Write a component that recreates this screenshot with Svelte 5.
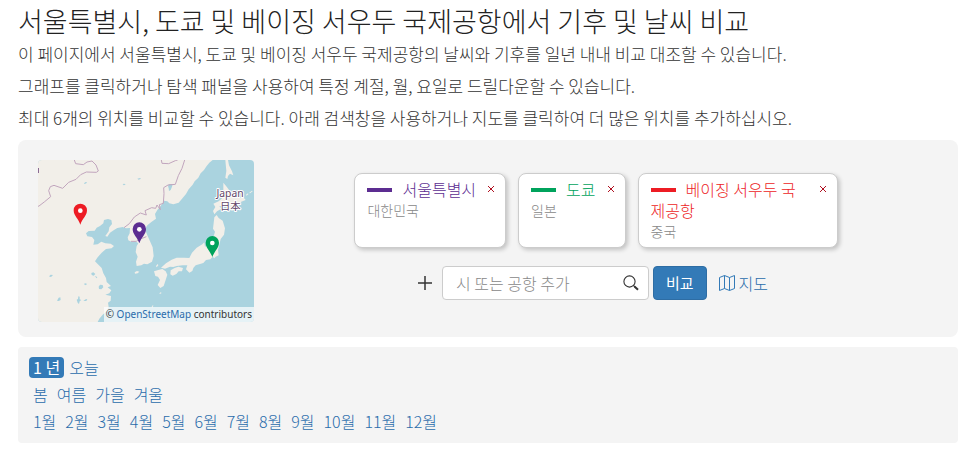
<script>
  const places = [
    { name: "서울특별시", country: "대한민국", color: "#5c2d91" },
    { name: "도쿄", country: "일본", color: "#00a35c" },
    { name: "베이징 서우두 국제공항", country: "중국", color: "#ed1c24" },
  ];

  const pins = [
    { x: 151, y: 224, color: "#ed1c24" },
    { x: 328, y: 280, color: "#5c2d91" },
    { x: 547, y: 321, color: "#00a35c" },
  ];

  const seasons = ["봄", "여름", "가을", "겨울"];
  const months = Array.from({ length: 12 }, (_, i) => `${i + 1}월`);

  let query = $state("");
</script>

<main>
  <h1>서울특별시, 도쿄 및 베이징 서우두 국제공항에서 기후 및 날씨 비교</h1>
  <p>이 페이지에서 서울특별시, 도쿄 및 베이징 서우두 국제공항의 날씨와 기후를 일년 내내 비교 대조할 수 있습니다.</p>
  <p>그래프를 클릭하거나 탐색 패널을 사용하여 특정 계절, 월, 요일로 드릴다운할 수 있습니다.</p>
  <p>최대 6개의 위치를 비교할 수 있습니다. 아래 검색창을 사용하거나 지도를 클릭하여 더 많은 위치를 추가하십시오.</p>

  <section class="compare">
    <div class="map">
      <svg viewBox="24 30 648 486" role="img" aria-label="Map">
        <rect x="24" y="30" width="648" height="486" fill="#aad3df" />
        <g fill="#f2efe9">
          <path d="M24 30H548L538 38 530 48 522 60 512 70 505 83 494 94 488 104 476 118 468 132 458 144 446 158 430 163 418 160 412 154 402 152 392 168 382 180 375 192 378 206 364 216 352 226 345 238 352 256 362 278 368 292 371 318 366 335 352 343 342 341 334 346 320 348 318 335 323 320 317 306 320 288 325 280 316 274 304 275 295 271 293 262 299 250 300 234 288 235 278 231 262 234 252 240 240 248 232 260 226 258 236 244 238 232 246 222 244 210 234 207 222 210 220 220 210 228 200 233 194 242 176 243 168 250 172 259 186 261 193 270 190 284 203 283 214 275 226 280 242 281 252 288 245 295 228 297 215 308 203 322 195 334 206 345 215 354 220 370 228 384 230 396 243 408 233 412 244 421 238 430 226 434 243 438 242 452 234 458 236 470 230 484 218 494 208 506 203 516H24z" />
          <path d="M586 30h8l3 16 9 18 4 12-10-5-6 7-2 9-6 -4 3-20z" />
          <path d="M580 98 590 110 601 125 614 135 628 143 640 142 647 150 632 156 622 168 617 178 608 182 594 173 580 168 568 168 574 176 561 184 553 193 549 183 556 171 550 161 566 154 576 145 580 130z" />
          <path d="M553 202 560 195 566 204 578 212 585 235 582 254 572 267 568 284 564 300 566 316 557 320 553 325 548 320 541 328 528 330 520 339 510 342 497 346 490 354 487 363 478 368 468 358 472 346 458 346 440 348 430 351 420 350 405 356 393 353 408 340 425 329 440 323 462 323 478 324 486 308 500 293 517 283 523 277 525 290 538 282 550 262 555 245 549 236z" />
          <path d="M422 361 434 354 445 350 459 354 456 364 446 364 439 372 428 377 421 373z" />
          <path d="M372 364 385 360 397 357 407 364 412 374 407 390 401 408 391 414 383 405 390 390 384 380 376 378z" />
          <path d="M314 367l7-4 7 2-5 5-8 1zM378 348l5-6 2 4-5 6zM388 430l4-3 3 2-5 3zM648 134l6-4 1 3-6 4zM658 128l8-6 2 2-8 6zM365 470l4-5 1 3-4 6z" />
        </g>
        <g fill="#aad3df">
          <path d="M414 108l3-6 11 0-2 8-4 10-5 3-1-8zM162 101l3-4 6-1-2 4-5 2zM184 369l6-2 6 5-5 5-6-2zM206 410l4-6 8 1 2 7-6 6-7-1zM140 449l4-2 1-8 4 1 0 8 5 2-5 4-2 8-4-4zM81 452l5-9 5-1 1 8-6 3zM58 378l4-4 7 1-5 5-5 1zM160 453l7-5 5-1-3 6zM194 378l8 3-2 4zM278 102l5-1 4 3-6 2zM162 401l6-1 3 3-6 3zM322 86l8-2 3 2-7 3z" />
        </g>
        <g fill="none" stroke="#c1a5bd" stroke-width="3" stroke-linejoin="round">
          <path d="M133 30l4 11 23 3 11-8 15-3 12 12 7 18-6 4-30-1-17 8-14 14-22 9-18 18-26-9-11 4-5 12 6 18-18 15-17 13-12 4" />
          <path d="M394 30l2 10 20 1 20-9 7-2M464 30l-8 25-11 22-9 26-22 2-13 8 1 18 -2 29-12 4 3 15-10-14-4 10-12-2-20 9 4 13-18-6-18 12-15 20-16 12" />
          <path d="M303 274l16 0 9-8 11-2 10-4" />
        </g>
        <path d="M24 54h3v15h-3z" fill="#8b6b94" />
        <g class="country">
          <text x="600" y="140">Japan</text>
          <text x="601" y="179">日本</text>
        </g>
        {#each pins as pin}
          <g transform="translate({pin.x} {pin.y})">
            <path d="M0 0C-6-18-20-27-20-43a20 20 0 0 1 40 0C20-27 6-18 0 0z" fill={pin.color} />
            <circle cx="0" cy="-42" r="7" fill="#fff" />
          </g>
        {/each}
      </svg>
      <small>© <a href="#osm">OpenStreetMap</a> contributors</small>
    </div>

    <div class="controls">
      <ul class="cards">
        {#each places as place}
          <li style:color={place.color}>
            <div class="place">
              <span class="line"></span>{place.name}
              <span class="where">{place.country}</span>
            </div>
            <button class="remove" type="button" aria-label="{place.name} 삭제">
              <svg viewBox="0 0 8 8"><path d="M1 1l6 6M7 1L1 7" /></svg>
            </button>
          </li>
        {/each}
      </ul>

      <form class="search" onsubmit={(e) => e.preventDefault()}>
        <svg class="plus" viewBox="0 0 14 14"><path d="M7 0v14M0 7h14" /></svg>
        <div class="field">
          <input type="text" aria-label="시 또는 공항 추가" placeholder="시 또는 공항 추가" bind:value={query} />
          <svg viewBox="0 0 16 16">
            <circle cx="6.5" cy="6.5" r="5.6" />
            <path d="M10.5 10.5l1.5 1.5" />
            <path class="handle" d="M11.5 11.5l3.5 3.2" />
          </svg>
        </div>
        <button class="submit" type="submit">비교</button>
        <a class="map-link" href="#map">
          <svg viewBox="0 0 16 16">
            <path d="M.5 2.5l5-2 5 2 5-2v13l-5 2-5-2-5 2zM5.500 .5v13M10.500 2.500v13" />
          </svg>지도
        </a>
      </form>
    </div>
  </section>

  <nav>
    <div><a class="active" href="#year">1 년</a><a href="#today">오늘</a></div>
    <div>
      {#each seasons as season}<a href="#{season}">{season}</a>{/each}
    </div>
    <div>
      {#each months as month}<a href="#{month}">{month}</a>{/each}
    </div>
  </nav>
</main>

<style>
  :global(body) {
    margin: 0;
    background: #fff;
  }

  main {
    padding: 5px 19px 0 18px;
    font-family: "Noto Sans CJK KR", sans-serif;
    font-size: 16px;
    font-weight: 300;
    line-height: 22px;
    color: #333;
  }

  h1 {
    margin: 0 0 6px;
    font-size: 27px;
    font-weight: 300;
    line-height: 32px;
    color: #222;
  }

  p {
    margin: 0 0 10px;
    font-size: 17px;
  }

  a {
    color: #2a6cab;
    text-decoration: none;
  }

  button,
  input {
    font: inherit;
  }

  .compare {
    display: flex;
    margin-top: 11px;
    padding: 20px 20px 15px;
    border-radius: 8px;
    background: #f4f4f4;
  }

  .map {
    position: relative;
    flex: none;
    width: 216px;
    height: 162px;
    border-radius: 4px;
    overflow: hidden;
  }

  .map svg {
    display: block;
    width: 100%;
  }

  .country {
    font-family: "Noto Sans", "Noto Sans CJK JP", sans-serif;
    font-size: 31px;
    font-weight: 400;
    text-anchor: middle;
    fill: #634669;
    stroke: #fff;
    stroke-width: 6px;
    stroke-linejoin: round;
    paint-order: stroke;
  }

  .map small {
    position: absolute;
    right: 0;
    bottom: 0;
    padding: 0 2px;
    font-family: "Noto Sans", sans-serif;
    font-size: 10px;
    font-weight: 400;
    line-height: 15px;
    color: #333;
    background: rgba(255, 255, 255, 0.7);
    white-space: nowrap;
  }

  .controls {
    flex: 1;
    padding-top: 13px;
  }

  .cards {
    display: flex;
    justify-content: center;
    gap: 12px;
    margin: 0;
    padding: 0;
    list-style: none;
  }

  .cards li {
    display: flex;
    gap: 11px;
    box-sizing: border-box;
    min-height: 75px;
    max-width: 200px;
    padding: 5px 10px 5px 12px;
    border: 1px solid #ccc;
    border-radius: 8px;
    background: #fff;
    box-shadow: 2px 2px 4px rgba(0, 0, 0, 0.2);
  }

  .place {
    flex: 1;
    line-height: 21px;
  }

  .line {
    display: inline-block;
    width: 25px;
    height: 4px;
    margin-right: 10px;
    vertical-align: 4px;
    background: currentColor;
  }

  .where {
    display: block;
    font-size: 14px;
    line-height: 20px;
    color: #888;
  }

  .remove {
    display: flex;
    align-self: flex-start;
    margin-top: 6px;
    padding: 0;
    border: 0;
    background: none;
    cursor: pointer;
  }

  .remove svg {
    width: 8px;
    height: 8px;
    stroke: #b01020;
    stroke-width: 1;
  }

  .search {
    display: flex;
    align-items: center;
    justify-content: center;
    margin-top: 18px;
    padding-right: 6px;
  }

  .plus {
    width: 14px;
    height: 14px;
    margin-right: 10px;
    stroke: #333;
    stroke-width: 1.5;
  }

  .field {
    position: relative;
    width: 207px;
  }

  .field input {
    display: block;
    box-sizing: border-box;
    width: 100%;
    height: 34px;
    padding: 0 36px 0 13px;
    border: 1px solid #ccc;
    border-radius: 4px;
    background: #fff;
    color: #444;
  }

  .field input::placeholder {
    color: #888;
    opacity: 1;
  }

  .field svg {
    position: absolute;
    top: 9px;
    right: 10px;
    width: 16px;
    height: 16px;
    fill: none;
    stroke: #333;
    stroke-width: 1.1;
  }

  .field .handle {
    stroke-width: 2;
  }

  .submit {
    height: 34px;
    margin: 0 12px 0 4px;
    padding: 0 12px;
    border: 1px solid #2e6da4;
    border-radius: 4px;
    background: #337ab7;
    color: #fff;
    font-size: 15px;
    font-weight: 400;
    cursor: pointer;
  }

  .map-link {
    display: flex;
    align-items: center;
    gap: 4px;
  }

  .map-link svg {
    width: 16px;
    height: 16px;
    fill: none;
    stroke: #337ab7;
  }

  nav {
    margin-top: 10px;
    padding: 10px 11px 11px;
    border-radius: 4px;
    background: #f4f4f4;
  }

  nav div {
    display: flex;
    gap: 1px;
    margin-bottom: 6px;
  }

  nav div:last-child {
    margin-bottom: 0;
  }

  nav a {
    padding: 0 4px;
    line-height: 21px;
    border-radius: 4px;
  }

  nav .active {
    background: #337ab7;
    color: #fff;
    font-weight: 400;
  }
</style>
